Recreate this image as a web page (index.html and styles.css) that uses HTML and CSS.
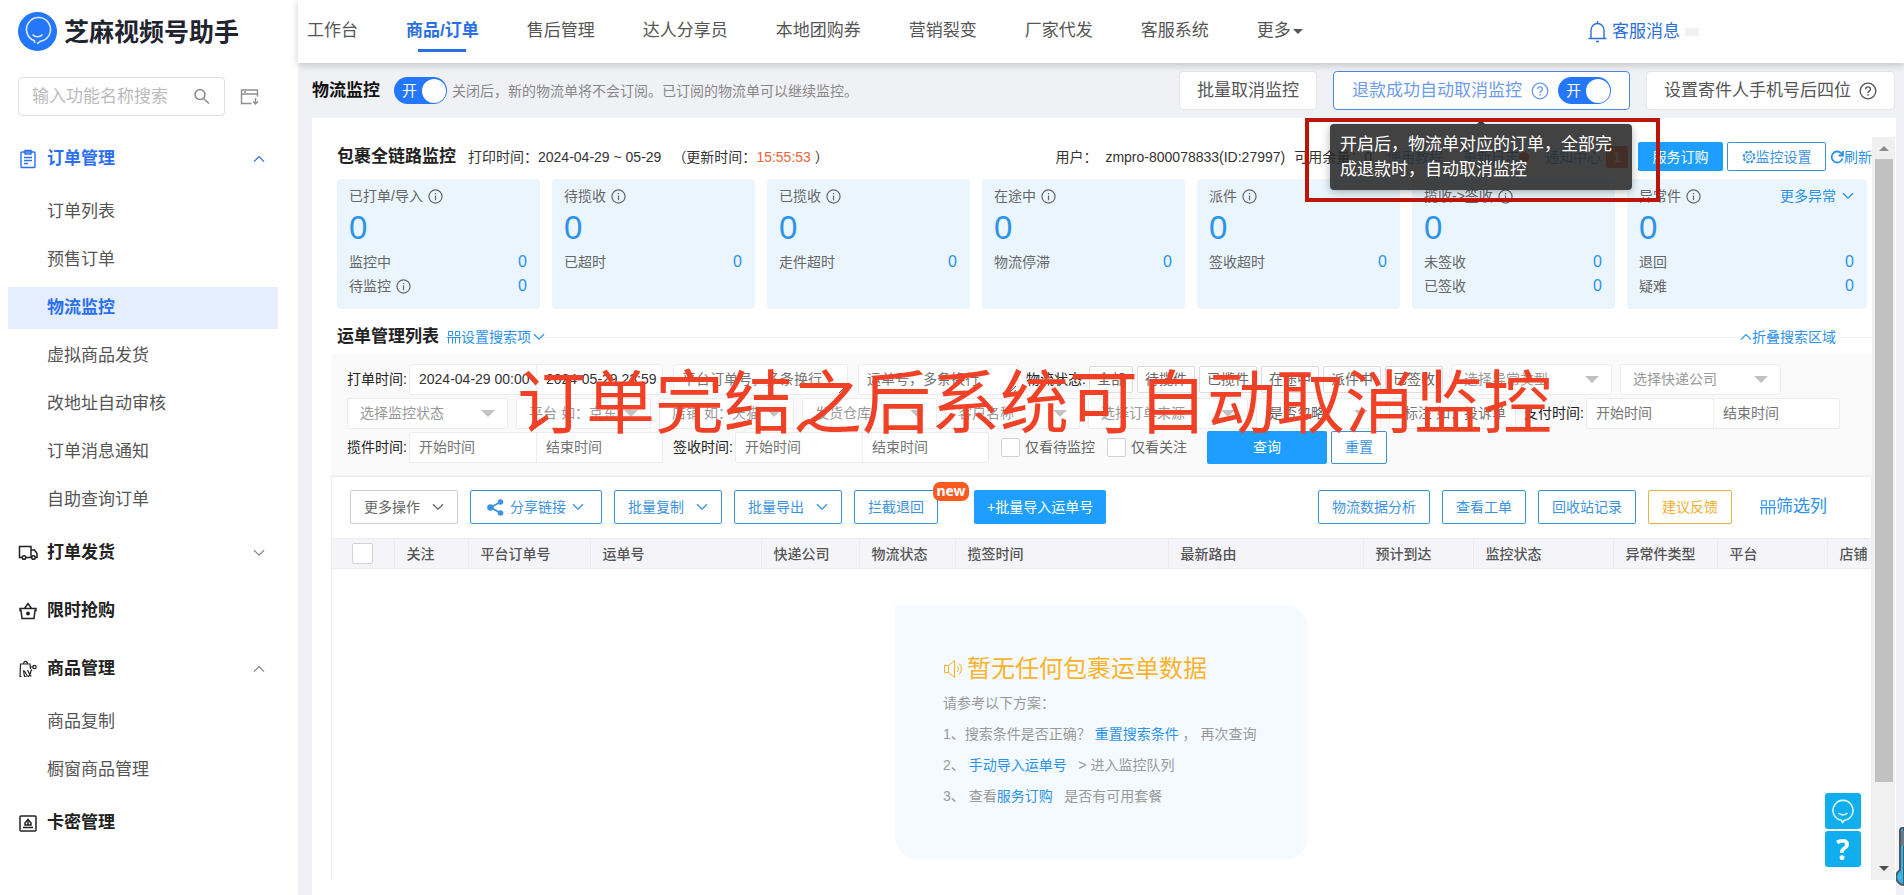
FILE: index.html
```html
<!DOCTYPE html>
<html lang="zh-CN">
<head>
<meta charset="utf-8">
<title>芝麻视频号助手 - 物流监控</title>
<link rel="stylesheet" href="styles.css">
</head>
<body>
<svg class="defs" width="0" height="0" aria-hidden="true">
  <symbol id="i-info" viewBox="0 0 16 16"><circle cx="8" cy="8" r="7" fill="none" stroke="currentColor" stroke-width="1.3"/><path d="M8 7v5M8 4.2v1.4" stroke="currentColor" stroke-width="1.3"/></symbol>
  <symbol id="i-help" viewBox="0 0 18 18"><circle cx="9" cy="9" r="7.8" fill="none" stroke="currentColor" stroke-width="1.3"/><path d="M6.6 7.2a2.4 2.3 0 1 1 3.6 2c-.9.5-1.2.9-1.2 1.9M9 12.3v1.4" fill="none" stroke="currentColor" stroke-width="1.4"/></symbol>
  <symbol id="i-down" viewBox="0 0 12 8"><path d="M1 1.2l5 5 5-5" fill="none" stroke="currentColor" stroke-width="1.3"/></symbol>
  <symbol id="i-up" viewBox="0 0 12 8"><path d="M1 6.6l5-5 5 5" fill="none" stroke="currentColor" stroke-width="1.3"/></symbol>
  <symbol id="i-grid" viewBox="0 0 14 14"><path d="M1.500 1.500h4v4h-4zM8.500 1.500h4v4h-4zM0 7.500h14M1.500 13.500v-6M5.500 13.500v-6M8.500 13.500v-6M12.500 13.500v-6" fill="none" stroke="currentColor" stroke-width="1"/></symbol>
</svg>

<div class="app">
  <aside class="side">
    <div class="brand">
      <svg width="39" height="39" viewBox="0 0 39 39"><circle cx="19.500" cy="19.500" r="19.500" fill="#2476fb"/><path d="M16.500 31v-2.200A12 12 0 1 1 22 29.400c-.5 1-1.500 1.600-3.200 2.100" fill="none" stroke="#dbe9ff" stroke-width="1.600"/><path d="M14.500 22.500c2.500 3 7.500 3 10 0" fill="none" stroke="#dbe9ff" stroke-width="1.400"/></svg>
      <span>芝麻视频号助手</span>
    </div>
    <div class="finder">
      <div class="finder-box">
        <input type="text" placeholder="输入功能名称搜索" aria-label="输入功能名称搜索">
        <svg width="17" height="17" viewBox="0 0 17 17" fill="none" stroke="#888" stroke-width="1.500"><circle cx="7" cy="6.500" r="5"/><path d="M10.500 10.500l5.500 5"/></svg>
      </div>
      <svg width="20" height="18" viewBox="0 0 20 18" fill="none" stroke="#8f8f8f" stroke-width="1.400"><path d="M17.500 8.500V2H1.500v13.500h10M1.500 6h16M4 4h2M15.500 10v6M13 13.500l2.500 2.500 2.500-2.500"/></svg>
    </div>
    <nav class="menu">
      <a class="group on" href="#"><svg width="18" height="20" viewBox="0 0 18 20" fill="none" stroke="currentColor" stroke-width="1.400"><rect x="2" y="3" width="14" height="15.500" rx="1"/><path d="M6 1.500h6v3.500H6zM5 8.500h8M5 11.500h8M5 14.500h4"/></svg><span>订单管理</span><svg class="chev" width="12" height="8"><use href="#i-up"/></svg></a>
      <a class="item" href="#">订单列表</a>
      <a class="item" href="#">预售订单</a>
      <a class="item on" href="#">物流监控</a>
      <a class="item" href="#">虚拟商品发货</a>
      <a class="item" href="#">改地址自动审核</a>
      <a class="item" href="#">订单消息通知</a>
      <a class="item" href="#">自助查询订单</a>
      <a class="group" href="#"><svg width="20" height="18" viewBox="0 0 20 18" fill="none" stroke="currentColor" stroke-width="1.500"><path d="M4 13.500H1.500v-11h11.500v11H8M13 6h3.500l2.500 3.500v4h-1"/><circle cx="6" cy="13.500" r="1.800"/><circle cx="15.500" cy="13.500" r="1.800"/></svg><span>打单发货</span><svg class="chev" width="12" height="8"><use href="#i-down"/></svg></a>
      <a class="group" href="#"><svg width="18" height="18" viewBox="0 0 18 18" fill="none" stroke="currentColor" stroke-width="1.500"><path d="M1 6.500h16v2h-1l-1 8H3l-1-8H1zM5.500 6.500L9 1.500l3.500 5"/><circle cx="9" cy="11.500" r="1.200" fill="currentColor"/></svg><span>限时抢购</span></a>
      <a class="group" href="#"><svg width="19" height="18" viewBox="0 0 19 18" fill="none" stroke="currentColor" stroke-width="1.200"><path d="M3 16.500H1.500L2 4h9.500l.5 5M5 4c0-3.500 4-3.500 4 0M5 10.500c3 1.500 2 5 5 6 3-2 1-5 3.500-7M5 10.500l1 6h2M9 10l3 6h1M12 7h3"/><circle cx="16" cy="7" r="1.700"/></svg><span>商品管理</span><svg class="chev" width="12" height="8"><use href="#i-up"/></svg></a>
      <a class="item" href="#">商品复制</a>
      <a class="item" href="#">橱窗商品管理</a>
      <a class="group" href="#"><svg width="18" height="17" viewBox="0 0 18 17" fill="none" stroke="currentColor" stroke-width="1.500"><rect x="1" y="1" width="16" height="15" rx="1"/><path d="M4 12.500h10M6 10V8l3-3.500L12 8v2zM9 6.500v3"/></svg><span>卡密管理</span></a>
    </nav>
  </aside>

  <div class="main">
    <header class="top">
      <nav class="tabs">
        <a href="#">工作台</a>
        <a class="on" href="#">商品/订单</a>
        <a href="#">售后管理</a>
        <a href="#">达人分享员</a>
        <a href="#">本地团购券</a>
        <a href="#">营销裂变</a>
        <a href="#">厂家代发</a>
        <a href="#">客服系统</a>
        <a class="more" href="#">更多</a>
      </nav>
      <a class="msg" href="#"><svg width="19" height="24" viewBox="0 0 19 24" fill="none" stroke="currentColor" stroke-width="1.400"><path d="M3 18.500V10a6.500 6.500 0 0 1 13 0v8.500M.5 18.500h18M9.500 1v2.500M8 21.500h3"/></svg>客服消息<i></i></a>
    </header>

    <div class="bar">
      <h1>物流监控</h1>
      <button class="switch" type="button" role="switch" aria-checked="true" aria-label="物流监控开关"><span>开</span><i></i></button>
      <p>关闭后，新的物流单将不会订阅。已订阅的物流单可以继续监控。</p>
      <div class="bar-right">
        <button class="big" type="button">批量取消监控</button>
        <div class="big blue">
          <span>退款成功自动取消监控</span><svg width="18" height="18"><use href="#i-help"/></svg>
          <button class="switch" type="button" role="switch" aria-checked="true" aria-label="退款成功自动取消监控"><span>开</span><i></i></button>
          <div class="tip" role="tooltip">开启后，物流单对应的订单，全部完成退款时，自动取消监控</div>
          <div class="frame"></div>
        </div>
        <button class="big" type="button"><span>设置寄件人手机号后四位</span><svg width="18" height="18"><use href="#i-help"/></svg></button>
      </div>
    </div>

    <div class="panel">
      <div class="content">
        <div class="summary">
          <h2>包裹全链路监控</h2>
          <span class="printed">打印时间：2024-04-29 ~ 05-29</span>
          <span>（更新时间：<b>15:55:53</b> ）</span>
          <div class="account">
            <span>用户：</span><span class="uid">zmpro-800078833(ID:27997)</span><span class="quota">可用余量：0</span>
            <a class="guide" href="#">使用教程</a><a class="log" href="#">更新日志<i></i></a><a href="#">通知中心</a><em>1</em>
            <button class="fill buy" type="button">服务订购</button>
            <button class="line set" type="button"><svg width="14" height="14" viewBox="0 0 14 14" fill="none" stroke="currentColor"><circle cx="7" cy="7" r="2.300"/><circle cx="7" cy="7" r="5.500" stroke-width="2" stroke-dasharray="2.300 2"/><circle cx="7" cy="7" r="4.800" stroke-width=".8"/></svg>监控设置</button>
            <a class="refresh" href="#"><svg width="14" height="14" viewBox="0 0 14 14" fill="none" stroke="currentColor" stroke-width="1.800"><path d="M12.500 8.500A5.500 5.500 0 1 1 11 3l1.500 2M13 1v4.500H8.500"/></svg>刷新</a>
          </div>
        </div>

        <section class="cards">
          <div class="card"><h3>已打单/导入<svg width="15" height="15"><use href="#i-info"/></svg></h3><strong>0</strong><p>监控中<a href="#">0</a></p><p><span>待监控<svg width="15" height="15"><use href="#i-info"/></svg></span><a href="#">0</a></p></div>
          <div class="card"><h3>待揽收<svg width="15" height="15"><use href="#i-info"/></svg></h3><strong>0</strong><p>已超时<a href="#">0</a></p></div>
          <div class="card"><h3>已揽收<svg width="15" height="15"><use href="#i-info"/></svg></h3><strong>0</strong><p>走件超时<a href="#">0</a></p></div>
          <div class="card"><h3>在途中<svg width="15" height="15"><use href="#i-info"/></svg></h3><strong>0</strong><p>物流停滞<a href="#">0</a></p></div>
          <div class="card"><h3>派件<svg width="15" height="15"><use href="#i-info"/></svg></h3><strong>0</strong><p>签收超时<a href="#">0</a></p></div>
          <div class="card"><h3>揽收-&gt;签收<svg width="15" height="15"><use href="#i-info"/></svg></h3><strong>0</strong><p>未签收<a href="#">0</a></p><p>已签收<a href="#">0</a></p></div>
          <div class="card"><h3>异常件<svg width="15" height="15"><use href="#i-info"/></svg><a href="#">更多异常<svg width="12" height="8"><use href="#i-down"/></svg></a></h3><strong>0</strong><p>退回<a href="#">0</a></p><p>疑难<a href="#">0</a></p></div>
        </section>

        <div class="list-head">
          <h2>运单管理列表</h2>
          <a href="#"><svg width="14" height="14"><use href="#i-grid"/></svg>设置搜索项<svg width="12" height="8"><use href="#i-down"/></svg></a>
          <hr>
          <a class="fold" href="#"><svg width="12" height="8"><use href="#i-up"/></svg>折叠搜索区域</a>
          <hr class="short">
        </div>

        <form class="filters">
          <div class="row">
            <label for="d1">打单时间:</label>
            <div class="range"><input id="d1" type="text" value="2024-04-29 00:00"><input type="text" value="2024-05-29 23:59" aria-label="打单结束时间"></div>
            <textarea class="w175" rows="1" placeholder="平台订单号，多条换行" aria-label="平台订单号"></textarea>
            <textarea class="w160" rows="1" placeholder="运单号，多条换行" aria-label="运单号"></textarea>
            <span class="chips"><span>物流状态:</span><button type="button">全部</button><button type="button">待揽件</button><button type="button">已揽件</button><button type="button">在途中</button><button type="button">派件中</button><button type="button">已签收</button></span>
            <div class="sel w161"><select aria-label="异常类型"><option>选择异常类型</option></select></div>
            <div class="sel w161"><select aria-label="快递公司"><option>选择快递公司</option></select></div>
          </div>
          <div class="row">
            <div class="sel w161"><select aria-label="监控状态"><option>选择监控状态</option></select></div>
            <div class="sel w135"><select aria-label="平台"><option>平台 如：京东</option></select></div>
            <div class="sel w135"><select aria-label="店铺"><option>店铺 如：天猫</option></select></div>
            <div class="sel w135"><select aria-label="发货仓库"><option>发货仓库</option></select></div>
            <div class="sel w135"><select aria-label="客户名称"><option>客户名称</option></select></div>
            <div class="sel w160"><select aria-label="订单来源"><option>选择订单来源</option></select></div>
            <div class="sel dark w125"><select aria-label="是否忽略"><option>是否忽略</option></select></div>
            <input class="note" type="text" placeholder="标注 如：投诉单" aria-label="标注">
            <label for="d2">支付时间:</label>
            <div class="range"><input id="d2" type="text" placeholder="开始时间"><input type="text" placeholder="结束时间" aria-label="支付结束时间"></div>
          </div>
          <div class="row">
            <label for="d3">揽件时间:</label>
            <div class="range"><input id="d3" type="text" placeholder="开始时间"><input type="text" placeholder="结束时间" aria-label="揽件结束时间"></div>
            <label for="d4">签收时间:</label>
            <div class="range"><input id="d4" type="text" placeholder="开始时间"><input type="text" placeholder="结束时间" aria-label="签收结束时间"></div>
            <label class="check"><input type="checkbox">仅看待监控</label>
            <label class="check"><input type="checkbox">仅看关注</label>
            <button class="fill query" type="submit">查询</button>
            <button class="line reset" type="reset">重置</button>
          </div>
          <div class="caption">订单完结之后系统可自动取消监控</div>
        </form>

        <div class="sheet">
          <div class="tools">
            <button class="line drop gray" type="button">更多操作<svg width="12" height="8"><use href="#i-down"/></svg></button>
            <button class="line share" type="button"><svg width="17" height="17" viewBox="0 0 17 17" fill="currentColor"><path d="M3.500 8.500L13.500 3M3.500 8.500l10 5.500" stroke="currentColor" stroke-width="1.800"/><circle cx="3.500" cy="8.500" r="3.300"/><circle cx="13.500" cy="3" r="2.800"/><circle cx="13.500" cy="14" r="2.800"/></svg>分享链接<svg width="12" height="8"><use href="#i-down"/></svg></button>
            <button class="line drop" type="button">批量复制<svg width="12" height="8"><use href="#i-down"/></svg></button>
            <button class="line drop" type="button">批量导出<svg width="12" height="8"><use href="#i-down"/></svg></button>
            <button class="line block" type="button">拦截退回<i>new</i></button>
            <button class="fill" type="button">+批量导入运单号</button>
            <div class="tools-right">
              <button class="line" type="button">物流数据分析</button>
              <button class="line" type="button">查看工单</button>
              <button class="line" type="button">回收站记录</button>
              <button class="line gold" type="button">建议反馈</button>
              <a href="#"><svg width="16" height="16" viewBox="0 0 14 14"><use href="#i-grid"/></svg>筛选列</a>
            </div>
          </div>
          <table>
            <colgroup><col class="c62"><col class="c74"><col class="c122"><col class="c171"><col class="c98"><col class="c96"><col class="c213"><col class="c195"><col class="c110"><col class="c140"><col class="c104"><col class="c110"><col></colgroup>
            <thead><tr><th><input type="checkbox" aria-label="全选"></th><th>关注</th><th>平台订单号</th><th>运单号</th><th>快递公司</th><th>物流状态</th><th>揽签时间</th><th>最新路由</th><th>预计到达</th><th>监控状态</th><th>异常件类型</th><th>平台</th><th>店铺</th></tr></thead>
          </table>
          <div class="empty">
            <h2><svg width="20" height="20" viewBox="0 0 20 20" fill="none" stroke="currentColor"><path d="M1.500 6.500h4l6-5v17l-6-5h-4zM5.500 6.500v7M14 7a4 4 0 0 1 0 6M16 4.500a7.500 7.500 0 0 1 0 11"/></svg>暂无任何包裹运单数据</h2>
            <p>请参考以下方案：</p>
            <p>1、搜索条件是否正确？ <a href="#">重置搜索条件</a> ， 再次查询</p>
            <p>2、 <a href="#">手动导入运单号</a> &nbsp; &gt; 进入监控队列</p>
            <p>3、 查看<a href="#">服务订购</a> &nbsp; 是否有可用套餐</p>
          </div>
        </div>
      </div>
      <div class="scroll"><i class="arrow-up"></i><i class="thumb"></i><i class="arrow-down"></i></div>
    </div>
  </div>
</div>

<div class="float">
  <button type="button" aria-label="在线客服"><svg width="24" height="26" viewBox="0 0 24 26" fill="none" stroke="#d9fbff" stroke-width="1.600"><path d="M10.500 22.300A10 10 0 1 1 13.500 22.300L11.500 24.500z"/><path d="M7.500 15c2.500 2.500 6.500 2.500 9 0"/></svg></button>
  <button type="button" aria-label="帮助">?</button>
</div>
<svg class="gauge" width="8" height="60" viewBox="0 0 8 60"><path d="M8 1H6.500Q4 1 4 4v39a8 8 0 0 0-1 13q2 2 5 2z" fill="#35b4e6" stroke="#4a5964" stroke-width="2"/><path d="M5 4h3v15H5z" fill="#6d7b87"/></svg>
</body>
</html>
```
FILE: styles.css
```css
* { box-sizing: border-box; }
body { margin: 0; font: 14px/20px "Liberation Sans", "Noto Sans CJK SC", sans-serif; color: #333; background: #fff; overflow: hidden; }
a { color: #2d93e8; text-decoration: none; }
h1, h2, h3, p { margin: 0; }
button, input, select, textarea { font: inherit; color: inherit; }
button { cursor: pointer; padding: 0; white-space: nowrap; }
svg { flex: none; }
.defs { position: absolute; }
.app { display: flex; min-height: 100vh; }

/* sidebar */
.side { width: 298px; flex: none; background: #fff; font-size: 17px; }
.brand { display: flex; align-items: center; gap: 7px; height: 63px; padding-left: 18px; font-size: 25px; font-weight: 700; color: #1f2430; line-height: 36px; }
.finder { display: flex; align-items: center; gap: 15px; padding: 14px 18px; }
.finder-box { display: flex; align-items: center; width: 207px; height: 39px; padding: 0 14px 0 13px; border: 1px solid #e0e0e0; border-radius: 4px; }
.finder-box input { flex: 1; min-width: 0; border: 0; padding: 0; outline: 0; background: none; }
.finder-box input::placeholder { color: #bbb; }
.menu { display: flex; flex-direction: column; }
.group { display: flex; align-items: center; height: 58px; padding: 0 33px 0 18px; font-weight: 700; color: #222; }
.group > svg:first-child { width: 20px; }
.group span { margin-left: 9px; }
.group.on { color: #2b6ff0; }
.chev { margin-left: auto; color: #888; }
.on .chev { color: #2b6ff0; }
.item { display: flex; align-items: center; height: 42px; margin: 3px 20px 3px 8px; padding-left: 39px; color: #555; }
.item.on { background: #e5eefe; color: #2b6ff0; font-weight: 700; }

/* header */
.main { flex: 1; min-width: 0; display: flex; flex-direction: column; background: #f0f1f5; }
.top { display: flex; align-items: center; height: 63px; padding: 0 205px 0 9px; background: #fff; box-shadow: 0 2px 8px rgba(0, 0, 0, .2); font-size: 17px; z-index: 1; }
.tabs { display: flex; gap: 48px; }
.tabs a { display: flex; align-items: center; flex-direction: column; height: 42px; padding-top: 10px; color: #555; white-space: nowrap; }
.tabs .on { color: #2b6fe6; font-weight: 700; }
.tabs .on::after { content: ""; width: 48px; height: 3px; margin-top: 8px; background: #2b6fe6; }
.tabs .more { flex-direction: row; align-items: flex-start; gap: 2px; }
.tabs .more::after { content: ""; margin-top: 8px; border: 5px solid transparent; border-top-color: #555; }
.msg { display: flex; align-items: center; gap: 5px; margin-left: auto; color: #2d6fd8; white-space: nowrap; }
.msg i { width: 14px; height: 8px; border-radius: 2px; background: #f0f0f2; }

/* toolbar above panel */
.bar { display: flex; align-items: center; height: 55px; padding: 0 9px 0 14px; }
.bar h1 { font-size: 17px; color: #111; white-space: nowrap; }
.bar p { margin-left: 5px; color: #888; white-space: nowrap; }
.switch { display: flex; align-items: center; justify-content: space-between; width: 53px; height: 27px; padding: 0 1px 0 8px; border: 0; border-radius: 14px; background: #2476fb; color: #fff; font-size: 15px; }
.switch i { width: 24px; height: 24px; border-radius: 50%; background: #fff; }
.bar > .switch { margin-left: 14px; }
.bar-right { display: flex; gap: 16px; margin-left: auto; font-size: 17px; color: #555; }
.big { position: relative; display: flex; align-items: center; gap: 8px; height: 39px; padding: 0 17px; border: 1px solid #e6e6e9; border-radius: 4px; background: #fff; white-space: nowrap; }
.big.blue { gap: 9px; padding: 0 18px; border-color: #4a86e8; color: #6b9bec; }
.tip { position: absolute; left: -4px; top: 52px; width: 302px; padding: 8px 10px; border-radius: 4px; background: rgba(40, 40, 40, .88); box-shadow: 0 2px 8px rgba(0, 0, 0, .3); color: #fff; line-height: 25px; white-space: normal; z-index: 3; }
.tip::before { content: ""; position: absolute; left: 147px; top: -4px; border: 4px solid transparent; border-top: 0; border-bottom-color: #3e3e3e; }
.frame { position: absolute; left: -29px; top: 46px; width: 355px; height: 84px; border: 4px solid #bb1605; z-index: 4; pointer-events: none; }

/* panel */
.panel { flex: 1; display: flex; margin: 0 8px 0 14px; padding: 19px 0 15px; background: #fff; }
.content { flex: 1; min-width: 0; display: flex; flex-direction: column; padding-left: 19px; }
.summary { display: flex; align-items: center; height: 42px; padding: 0 0 3px 6px; white-space: nowrap; }
.summary h2, .list-head h2 { font-size: 17px; color: #222; white-space: nowrap; }
.printed { margin: 0 11px 0 12px; }
.summary b { font-weight: 400; color: #ee6338; }
.account { display: flex; align-items: center; margin-left: auto; }
.uid { margin: 0 9px 0 8px; }
.quota { margin-right: 15px; }
.guide { margin-right: 20px; }
.log { display: flex; align-items: center; margin-right: 16px; }
.log i { width: 10px; height: 10px; border-radius: 50%; background: #f0502a; }
.account em { width: 22px; height: 22px; margin: 0 10px 0 5px; border-radius: 2px; background: #ff5722; color: #fff; font-style: normal; line-height: 22px; text-align: center; }
.fill { border: 0; border-radius: 2px; background: #1e9fff; color: #fff; }
.line { display: inline-flex; align-items: center; justify-content: center; gap: 8px; border: 1px solid #3c92d8; border-radius: 2px; background: #fff; color: #3d93e0; }
.buy, .set { height: 29px; }
.buy { width: 85px; margin-right: 4px; }
.set { width: 99px; gap: 0; margin-right: 4px; }
.refresh { display: flex; align-items: center; }

.cards { display: grid; grid-template-columns: repeat(6, 203fr) 240fr; gap: 12px; padding: 0 5px 0 6px; }
.card { height: 130px; padding: 7px 13px 7px 12px; border-radius: 4px; background: #eaf5fe; color: #666; }
.card h3 { display: flex; align-items: center; gap: 5px; font-size: 14px; font-weight: 400; }
.card h3 a { display: flex; align-items: center; gap: 6px; margin-left: auto; }
.card strong { display: block; padding: 4px 0; margin-bottom: 2px; font-size: 33px; font-weight: 400; line-height: 36px; color: #2d93e8; }
.card p { display: flex; justify-content: space-between; height: 24px; }
.card p span { display: flex; align-items: center; gap: 5px; height: 20px; }
.card p a { font-size: 16px; }

.list-head { display: flex; align-items: center; height: 46px; padding: 10px 0 0 6px; }
.list-head a { display: flex; align-items: center; margin-left: 8px; white-space: nowrap; }
.list-head a svg:last-child { margin-left: 2px; }
.list-head hr { flex: 1; height: 1px; margin: 0; border: 0; background: #f0f0f0; }
.list-head .fold { margin: 0 2px; }
.list-head .short { flex: none; width: 34px; }

.filters { position: relative; display: grid; gap: 2px; padding: 7px 0 12px 16px; background: #fafafa; border: 0 solid #f5f5f5; border-width: 1px 0; color: #666; }
.row { display: flex; align-items: center; height: 32px; gap: 8px; white-space: nowrap; }
.row label { width: 62px; margin-right: -8px; color: #222; }
.range + label { margin-left: 2px; }
.range { display: flex; width: 254px; height: 31px; border: 1px solid #ececec; border-radius: 2px; background: #fff; color: #333; }
.range input { width: 50%; min-width: 0; padding: 0 0 0 9px; border: 0; background: none; }
.range input + input { border-left: 1px dotted #ddd; }
.row input::placeholder, .row textarea::placeholder { color: #757575; }
.row textarea { height: 31px; margin: 0 0 0 2px; padding: 4px 8px; border: 1px solid #ececec; border-radius: 2px; background: #fff; line-height: 20px; overflow: hidden; }
.w175 { width: 175px; }
.w161 { width: 161px; }
.w160 { width: 160px; }
.w135 { width: 135px; }
.w125 { width: 125px; }
.chips { display: flex; align-items: center; gap: 4px; }
.chips > span { width: 59px; color: #222; }
.chips button { height: 27px; padding: 0 7px; border: 1px solid #ddd; border-radius: 2px; background: #fff; }
.sel { position: relative; height: 31px; }
.sel select { width: 100%; height: 100%; padding: 0 12px; border: 1px solid #ececec; border-radius: 2px; appearance: none; background: #fff; color: #999; }
.sel.dark select { color: #666; }
.sel::after { content: ""; position: absolute; right: 13px; top: 12px; border: 7px solid transparent; border-top-color: #c2c2c2; border-bottom: 0; }
.note { width: 127px; height: 31px; padding: 0 0 0 14px; border: 1px solid #ececec; border-radius: 2px; background: #fff; }
.row .check { display: flex; align-items: center; gap: 5px; width: auto; margin: 0 0 0 4px; color: #666; }
.check input, th input { flex: none; width: 19px; height: 19px; margin: 0; appearance: none; border: 1px solid #d2d2d2; border-radius: 2px; background: #fff; }
.query { width: 120px; height: 33px; margin-left: 12px; }
.reset { width: 56px; height: 33px; margin-left: -4px; }
.caption { position: absolute; left: 186px; top: 0; font-size: 69px; line-height: 98px; color: #f04126; white-space: nowrap; pointer-events: none; }

.sheet { flex: 1; border: 1px solid #eee; border-bottom: 0; }
.tools { display: flex; gap: 12px; padding: 13px 44px 14px 18px; }
.tools button { height: 34px; padding: 0 13px; }
.tools .drop { gap: 12px; }
.tools .share { padding: 0 17px 0 16px; gap: 6px; }
.tools .gray { border-color: #ccc; color: #666; }
.tools .gold { border-color: #e0b54a; color: #efae2e; }
.tools .block { position: relative; margin-right: 24px; }
.block i { position: absolute; left: 78px; top: -9px; width: 36px; height: 19px; border-radius: 7px; background: #f95a24; color: #fff; font: 700 14px/18px "Noto Sans", sans-serif; }
.tools-right { display: flex; align-items: center; gap: 12px; margin-left: auto; }
.tools-right a { display: flex; align-items: center; margin-left: 16px; font-size: 17px; white-space: nowrap; }
table { width: 100%; table-layout: fixed; border-collapse: collapse; }
th { height: 30px; padding: 0 0 0 12px; border: 1px solid #ececf0; border-left: 0; background: #f4f4f9; color: #555; font-weight: 500; text-align: left; white-space: nowrap; overflow: hidden; }
th:first-child { padding-left: 20px; }
th:last-child { border-right: 0; }
th input { display: block; width: 21px; height: 21px; }
.c62 { width: 62px; }
.c74 { width: 74px; }
.c96 { width: 96px; }
.c98 { width: 98px; }
.c104 { width: 104px; }
.c110 { width: 110px; }
.c122 { width: 122px; }
.c140 { width: 140px; }
.c171 { width: 171px; }
.c195 { width: 195px; }
.c213 { width: 213px; }

.empty { width: 413px; height: 255px; margin: 36px auto 0; padding: 48px 0 0 48px; border-radius: 0 24px 24px; background: #f4faff; color: #999; white-space: nowrap; }
.empty h2 { display: flex; align-items: center; gap: 4px; margin-bottom: 3px; font-size: 24px; font-weight: 400; line-height: 32px; color: #fbb32b; }
.empty p { line-height: 31px; }

.scroll { width: 23px; display: flex; flex-direction: column; align-items: center; flex: none; margin-right: 1px; padding: 9px 0; background: #f0f0f0; }
.arrow-up { border: 5px solid transparent; border-top: 0; border-bottom-color: #8c8c8c; }
.thumb { flex: 0 1 623px; width: 18px; margin: 8px 0 auto; background: #c1c1c1; }
.arrow-down { border: 5px solid transparent; border-bottom: 0; border-top-color: #505050; }

.float { position: fixed; right: 43px; bottom: 28px; display: grid; gap: 2px; z-index: 2; }
.float button { display: grid; place-items: center; width: 36px; height: 36px; border: 0; border-radius: 3px; background: #10aeef; color: #fff; font: 700 28px/36px "Noto Sans", sans-serif; }
.gauge { position: fixed; right: 0; bottom: 8px; z-index: 2; }
```
